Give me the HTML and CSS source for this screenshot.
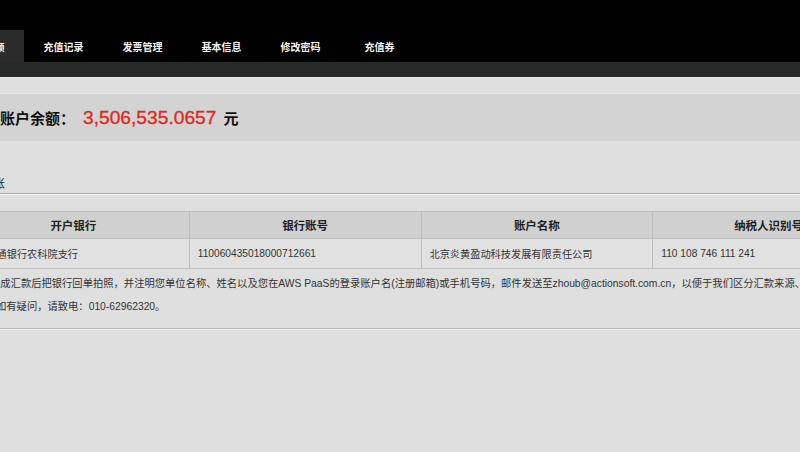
FILE: index.html
```html
<!DOCTYPE html>
<html lang="zh-CN">
<head>
<meta charset="utf-8">
<title>账户余额</title>
<link rel="stylesheet" href="styles.css">
</head>
<body>
<div class="topbar"></div>
<nav class="tabs">
  <div class="tab active">账户余额</div>
  <div class="tab">充值记录</div>
  <div class="tab">发票管理</div>
  <div class="tab">基本信息</div>
  <div class="tab">修改密码</div>
  <div class="tab">充值券</div>
</nav>
<div class="strip"></div>
<main class="content">
  <div class="balance">
    <span class="balance-label">账户余额：</span>
    <span class="balance-amount">3,506,535.0657</span>
    <span class="balance-unit">元</span>
  </div>
  <div class="section-title">银行转账</div>
  <table class="bank">
    <thead>
      <tr><th>开户银行</th><th>银行账号</th><th>账户名称</th><th>纳税人识别号</th></tr>
    </thead>
    <tbody>
      <tr><td>中国交通银行农科院支行</td><td>110060435018000712661</td><td>北京炎黄盈动科技发展有限责任公司</td><td>110 108 746 111 241</td></tr>
    </tbody>
  </table>
  <div class="notes">
    <p class="note note-1">完成汇款后把银行回单拍照，并注明您单位名称、姓名以及您在AWS PaaS的登录账户名(注册邮箱)或手机号码，邮件发送至zhoub@actionsoft.com.cn，以便于我们区分汇款来源、及时为您充值。</p>
    <p class="note note-2">如有疑问，请致电：010-62962320。</p>
  </div>
</main>
</body>
</html>
```
FILE: styles.css
```css
html, body {
  margin: 0;
  padding: 0;
}
body {
  width: 800px;
  height: 452px;
  overflow: hidden;
  background: #dfdfdf;
  font-family: "Liberation Sans", "Noto Sans CJK SC", sans-serif;
  color: #222;
}
.topbar {
  height: 30px;
  background: #000;
}
.tabs {
  display: flex;
  height: 32px;
  background: #000;
  margin-left: -55px;
}
.tab {
  width: 79px;
  flex: none;
  display: flex;
  align-items: center;
  justify-content: center;
  color: #f4f4f4;
  font-size: 10px;
  font-weight: bold;
}
.tab.active {
  background: #2b2b2b;
}
.strip {
  height: 15px;
  background: #262928;
  border-bottom: 1px solid #ececec;
}
.content {
  margin-left: -43px;
  width: 928px;
}
.balance {
  margin-top: 15px;
  height: 48px;
  background: #d3d3d3;
  border-top: 1px solid #e6e6e6;
  box-sizing: border-box;
  padding-left: 43px;
  display: flex;
  align-items: center;
}
.balance-label {
  font-size: 15px;
  color: #111;
  font-weight: bold;
}
.balance-amount {
  font-size: 19.2px;
  color: #e1251b;
  margin-left: 8px;
  -webkit-text-stroke: 0.3px #e1251b;
}
.balance-unit {
  font-size: 15px;
  color: #111;
  margin-left: 7px;
  font-weight: bold;
}
.section-title {
  padding-top: 34px;
  line-height: 18px;
  font-size: 12px;
  color: #222;
  border-bottom: 1px solid #a9a9a9;
  box-shadow: 0 1px 0 #f3f3f3;
}
.bank {
  margin-top: 17px;
  width: 928px;
  border-collapse: collapse;
  table-layout: fixed;
}
.bank th, .bank td {
  border: 1px solid #bdbdbd;
  white-space: nowrap;
  overflow: hidden;
}
.bank th {
  height: 26px;
  background: #d0d0d0;
  font-size: 11.5px;
  font-weight: bold;
  color: #222;
  padding: 0;
}
.bank td {
  height: 29px;
  background: #e1e1e1;
  font-size: 10.2px;
  color: #333;
  padding: 0 0 0 8px;
}
.notes {
  padding: 3px 0 10px;
  border-bottom: 1px solid #b8b8b8;
  box-shadow: 0 1px 0 #f0f0f0;
}
.note {
  margin: 0;
  line-height: 23px;
  font-size: 10.3px;
  color: #333;
  white-space: nowrap;
}
.note-1 {
  padding-left: 33px;
}
.note-2 {
  padding-left: 39px;
}
```
